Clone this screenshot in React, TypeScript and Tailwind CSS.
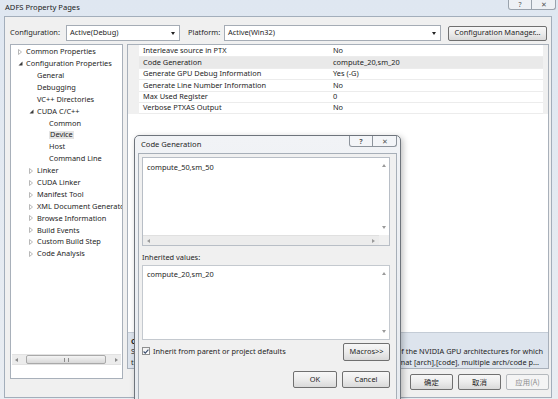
import React from 'react';

type TreeItem = { label: string; level: 0 | 1 | 2; state?: 'open' | 'closed'; selected?: boolean };

const tree: TreeItem[] = [
  { label: 'Common Properties', level: 0, state: 'closed' },
  { label: 'Configuration Properties', level: 0, state: 'open' },
  { label: 'General', level: 1 },
  { label: 'Debugging', level: 1 },
  { label: 'VC++ Directories', level: 1 },
  { label: 'CUDA C/C++', level: 1, state: 'open' },
  { label: 'Common', level: 2 },
  { label: 'Device', level: 2, selected: true },
  { label: 'Host', level: 2 },
  { label: 'Command Line', level: 2 },
  { label: 'Linker', level: 1, state: 'closed' },
  { label: 'CUDA Linker', level: 1, state: 'closed' },
  { label: 'Manifest Tool', level: 1, state: 'closed' },
  { label: 'XML Document Generator', level: 1, state: 'closed' },
  { label: 'Browse Information', level: 1, state: 'closed' },
  { label: 'Build Events', level: 1, state: 'closed' },
  { label: 'Custom Build Step', level: 1, state: 'closed' },
  { label: 'Code Analysis', level: 1, state: 'closed' },
];

const props = [
  { name: 'Interleave source in PTX', value: 'No' },
  { name: 'Code Generation', value: 'compute_20,sm_20', selected: true },
  { name: 'Generate GPU Debug Information', value: 'Yes (-G)' },
  { name: 'Generate Line Number Information', value: 'No' },
  { name: 'Max Used Register', value: '0' },
  { name: 'Verbose PTXAS Output', value: 'No' },
];

const indent = { 0: 'pl-[7px]', 1: 'pl-[18px]', 2: 'pl-[30px]' };

function Expander({ state }: { state?: 'open' | 'closed' }) {
  if (state === 'open')
    return (
      <svg width="5" height="5" viewBox="0 0 5 5">
        <path d="M4.5 0.5 L4.5 4.5 L0.5 4.5 Z" fill="#3c3c3c" />
      </svg>
    );
  if (state === 'closed')
    return (
      <svg width="4" height="6" viewBox="0 0 4 6">
        <path d="M0.5 0.5 L3.5 3 L0.5 5.5 Z" fill="none" stroke="#a6a6a6" strokeWidth="0.8" />
      </svg>
    );
  return null;
}

function Tri({ dir, color = '#9a9a9a' }: { dir: 'up' | 'down' | 'left' | 'right'; color?: string }) {
  const d = {
    up: 'M0 3 L2 0 L4 3 Z',
    down: 'M0 0 L4 0 L2 3 Z',
    left: 'M3 0 L3 4 L0 2 Z',
    right: 'M0 0 L3 2 L0 4 Z',
  }[dir];
  const vert = dir === 'up' || dir === 'down';
  return (
    <svg width={vert ? 4 : 3} height={vert ? 3 : 4} viewBox={vert ? '0 0 4 3' : '0 0 3 4'}>
      <path d={d} fill={color} />
    </svg>
  );
}

function Btn({ children, className = '', disabled = false }: { children: React.ReactNode; className?: string; disabled?: boolean }) {
  return (
    <div
      className={`flex items-center justify-center rounded-[2px] border ${
        disabled
          ? 'border-[#b5b9bd] bg-[#f4f4f4] text-[#8d8d8d]'
          : 'border-[#707070] bg-gradient-to-b from-[#f7f7f7] via-[#ececec] to-[#d9d9d9] text-[#1e1e1e]'
      } ${className}`}
    >
      {children}
    </div>
  );
}

function Combo({ value, className = '' }: { value: string; className?: string }) {
  return (
    <div className={`flex h-[16px] items-center justify-between border border-[#a5acb5] bg-white pl-[3px] pr-[4px] ${className}`}>
      <span>{value}</span>
      <Tri dir="down" color="#222" />
    </div>
  );
}

export default function App() {
  return (
    <div className="relative h-[399px] w-[558px] overflow-hidden bg-gradient-to-b from-[#dfe7f1] to-[#e9edf2] font-['Noto_Sans',Arial,sans-serif] text-[7.4px] leading-none text-[#1e1e1e]">
      {/* Title bar */}
      <div className="relative flex h-[16px] items-center pl-[5px] text-[7.6px] text-[#1a1a1a]">
        ADFS Property Pages
        <div className="absolute right-[2px] top-0 flex h-[10px] rounded-b-[3px] border border-t-0 border-[#9aa3ad] bg-[#eef1f5]">
          <div className="flex w-[23px] items-center justify-center border-r border-[#9aa3ad] text-[7px] text-[#555]">?</div>
          <div className="flex w-[23px] items-center justify-center text-[7px] text-[#555]">✕</div>
        </div>
      </div>

      {/* Client area */}
      <div className="ml-[4px] flex h-[382px] w-[548px] flex-col border border-[#a3aebb] bg-[#f0f0f0] pl-[5px] pt-[8px]">
        {/* Configuration row */}
        <div className="flex h-[16px] items-center">
          <span className="w-[56px]">Configuration:</span>
          <Combo value="Active(Debug)" className="w-[114px]" />
          <span className="ml-[8px] w-[36px]">Platform:</span>
          <Combo value="Active(Win32)" className="w-[217px]" />
          <Btn className="ml-[7px] h-[15px] w-[99px]">Configuration Manager...</Btn>
        </div>

        <div className="mt-[3px] flex gap-[4px]">
          {/* Tree */}
          <div className="flex h-[335px] w-[113px] flex-col border border-[#a8b0ba] bg-white">
            <div className="flex h-[309px] flex-col overflow-hidden pt-[1px]">
              {tree.map((t) => (
                <div key={t.label} className={`flex h-[11.9px] shrink-0 items-center whitespace-nowrap ${indent[t.level]}`}>
                  <span className="flex w-[8px] shrink-0 items-center">
                    <Expander state={t.state} />
                  </span>
                  <span className={`shrink-0 ${t.selected ? 'bg-[#e4e4e4] px-[1px]' : ''}`}>{t.label}</span>
                </div>
              ))}
            </div>
            {/* horizontal scrollbar */}
            <div className="mx-[1px] flex h-[11px] items-center border-y border-[#e2e2e2] bg-[#ececec] px-[3px]">
              <Tri dir="left" color="#8a8a8a" />
              <div className="ml-[8px] flex h-[9px] w-[80px] items-center justify-center rounded-[2px] border border-[#a9a9a9] bg-gradient-to-b from-[#f4f4f4] to-[#d8d8d8]">
                <div className="h-[4px] w-[5px] border-x border-[#8c8c8c]" />
              </div>
              <div className="ml-auto">
                <Tri dir="right" color="#8a8a8a" />
              </div>
            </div>
          </div>

          {/* Right column */}
          <div className="flex flex-col">
            <div className="flex h-[325px] w-[422px] flex-col border border-[#a8b0ba] bg-white">
              <div className="flex flex-1 flex-col">
                <div className="flex">
                  <div className="w-[11px] bg-[#f0f0f0]" />
                  <div className="flex-1 pt-[1px]">
                    {props.map((p) => (
                      <div
                        key={p.name}
                        className={`flex h-[11.4px] items-center border-b border-[#ececec] ${p.selected ? 'bg-[#e9e9e9]' : ''}`}
                      >
                        <span className="w-[191px] pl-[4px]">{p.name}</span>
                        <span className="pl-[3px]">{p.value}</span>
                      </div>
                    ))}
                  </div>
                  <div className="w-[5px] bg-[#f0f0f0]" />
                </div>
              </div>
              {/* Description */}
              <div className="flex h-[36px] flex-col gap-[3px] border-t border-[#c4ccd6] bg-[#dde4ed] px-[3px] pt-[5px]">
                <span className="font-bold">Code Generation</span>
                <div className="flex justify-between whitespace-nowrap pr-[2px]">
                  <span>Specifies the names</span>
                  <span>of the NVIDIA GPU architectures for which</span>
                </div>
                <div className="flex justify-between whitespace-nowrap pr-[6px]">
                  <span>the CUDA input files</span>
                  <span>Format [arch],[code], multiple arch/code p...</span>
                </div>
              </div>
            </div>
            <div className="mt-[5px] flex justify-end gap-[5px]">
              <Btn className="h-[16px] w-[43px] font-['Noto_Sans_CJK_SC',sans-serif]">确定</Btn>
              <Btn className="h-[16px] w-[43px] font-['Noto_Sans_CJK_SC',sans-serif]">取消</Btn>
              <Btn disabled className="h-[16px] w-[43px] font-['Noto_Sans_CJK_SC',sans-serif]">应用(A)</Btn>
            </div>
          </div>
        </div>
      </div>

      {/* Code Generation dialog */}
      <div className="absolute left-[134px] top-[135px] flex h-[280px] w-[267px] flex-col rounded-t-[5px] border border-[#6e747c] bg-gradient-to-b from-[#f1f3f6] to-[#e6eaef] shadow-[2px_2px_6px_rgba(0,0,0,0.25)]">
        <div className="relative flex h-[17px] shrink-0 items-center pl-[6px] text-[7.6px]">
          Code Generation
          <div className="absolute right-[3px] top-0 flex h-[11px] rounded-b-[3px] border border-t-0 border-[#8d949c] bg-[#f3f5f8]">
            <div className="flex w-[23px] items-center justify-center border-r border-[#8d949c] text-[7px] font-bold text-[#555]">?</div>
            <div className="flex w-[23px] items-center justify-center text-[7px] text-[#555]">✕</div>
          </div>
        </div>
        <div className="mx-[3px] flex flex-1 flex-col border border-[#a7afb8] bg-[#f0f0f0] pl-[3px] pr-[6px] pt-[3px]">
          {/* Box 1 */}
          <div className="flex h-[89px] flex-col border border-[#b8bec6] bg-white">
            <div className="flex flex-1">
              <div className="flex-1 pl-[4px] pt-[6px]">compute_50,sm_50</div>
              <div className="flex w-[10px] flex-col items-center justify-between py-[6px]">
                <Tri dir="up" />
                <Tri dir="down" />
              </div>
            </div>
            <div className="flex h-[10px]">
              <div className="flex flex-1 items-center justify-between border-t border-[#e0e0e0] bg-[#ececec] px-[4px]">
                <Tri dir="left" />
                <Tri dir="right" />
              </div>
              <div className="w-[10px] bg-[#f0f0f0]" />
            </div>
          </div>

          <div className="mt-[8px] h-[8px]">Inherited values:</div>

          {/* Box 2 */}
          <div className="mt-[3px] flex h-[75px] border border-[#c4c9cf] bg-white">
            <div className="flex-1 pl-[4px] pt-[5px]">compute_20,sm_20</div>
            <div className="flex w-[10px] flex-col items-center justify-between py-[6px]">
              <Tri dir="up" />
              <Tri dir="down" />
            </div>
          </div>

          <div className="mt-[3px] flex items-center">
            <div className="mb-[2px] flex h-[8px] w-[8px] items-center justify-center border border-[#8e8f8f] bg-gradient-to-b from-[#f0f0f0] to-white">
              <svg width="6" height="5" viewBox="0 0 6 5">
                <path d="M0.6 2.5 L2.3 4.2 L5.4 0.6" fill="none" stroke="#3a4e6e" strokeWidth="1.1" />
              </svg>
            </div>
            <span className="ml-[3px]">Inherit from parent or project defaults</span>
            <Btn className="ml-auto h-[18px] w-[47px]">Macros&gt;&gt;</Btn>
          </div>

          <div className="mt-[10px] flex justify-end gap-[5px]">
            <Btn className="h-[17px] w-[44px]">OK</Btn>
            <Btn className="h-[17px] w-[48px]">Cancel</Btn>
          </div>
        </div>
      </div>
    </div>
  );
}
